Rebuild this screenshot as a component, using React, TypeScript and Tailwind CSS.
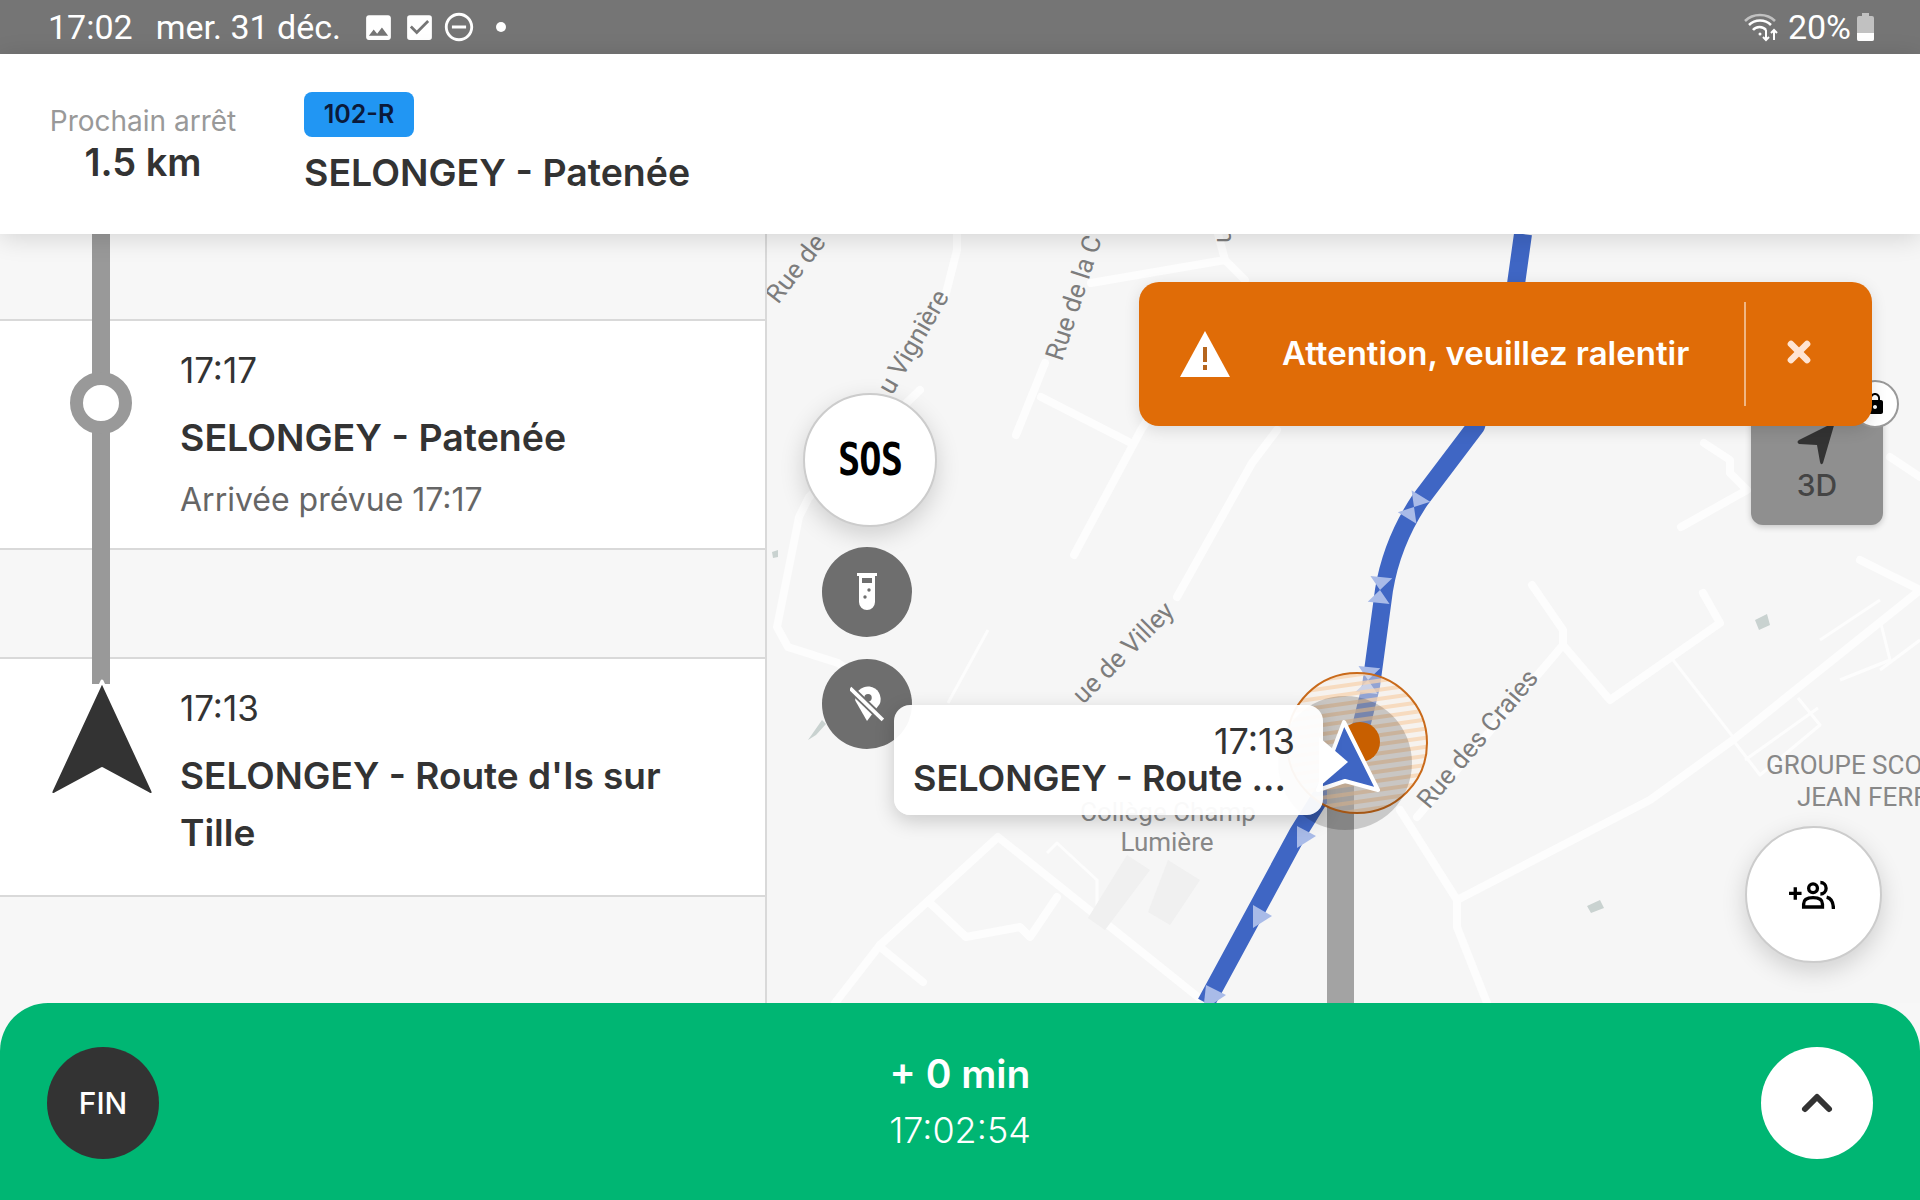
import { ChevronUp, X } from 'lucide-react';
import { MdCheckBox, MdImage, MdLock, MdRemoveCircleOutline } from 'react-icons/md';

const roads = [
  'M957 234 L957 250 L945 297',
  'M920 390 L809 497 L799 517 L777 627 L788 647 L838 663 L900 705',
  'M1045 363 L1016 435',
  'M1041 397 L1131 443',
  'M1160 400 L1141 430 L1074 555',
  'M1091 283 L1225 260 L1245 280',
  'M1225 260 L1218 234',
  'M1277 430 L1252 463 L1177 597',
  'M880 945 L998 837 L1198 997',
  'M880 947 L923 982',
  'M835 1003 L880 945',
  'M930 903 L966 937 L1020 927 L1030 937 L1057 897',
  'M1532 585 L1563 630 L1563 645 L1610 700 L1720 623 L1703 593',
  'M1563 645 L1417 817',
  'M1400 810 L1457 900 L1457 927 L1487 1003',
  'M1457 900 L1650 800 L1733 740 L1920 590',
  'M1860 560 L1920 590',
  'M1704 443 L1730 460 L1730 473 L1747 490 L1681 527',
  'M1890 457 L1920 477',
];

const thinRoads = [
  'M988 630 L948 703',
  'M1047 853 L1057 843 L1097 880 L1097 913',
  'M1673 660 L1733 737',
  'M1733 740 L1760 775 L1820 725 L1798 698',
  'M1745 760 L1818 708',
  'M1820 640 L1880 600',
  'M1840 680 L1890 660 L1880 620',
  'M1880 670 L1920 640',
];

const labels = [
  { text: 'Rue de', x: 778, y: 305, r: -52 },
  { text: 'u Vignière', x: 892, y: 396, r: -60 },
  { text: 'Rue de la C', x: 1062, y: 362, r: -72 },
  { text: 'u', x: 1231, y: 243, r: -90 },
  { text: 'ue de Villey', x: 1083, y: 705, r: -45 },
  { text: 'Rue des Craies', x: 1429, y: 810, r: -50 },
];

const hourglasses = [
  { x: 1414, y: 507, r: 32 },
  { x: 1380, y: 590, r: 6 },
  { x: 1368, y: 680, r: 6 },
];

function MapBackground() {
  return (
    <svg viewBox="767 234 1153 769" className="absolute inset-0 w-[1153px] h-[769px]">
      <defs>
        <pattern id="hatch" width="9" height="9" patternUnits="userSpaceOnUse" patternTransform="rotate(-8)">
          <rect width="9" height="9" fill="#f6eee4" fillOpacity="0.45" />
          <rect width="9" height="4" fill="#f6d3ae" fillOpacity="0.75" />
        </pattern>
      </defs>
      <rect x="767" y="234" width="1153" height="769" fill="#f6f6f6" />
      {roads.map((d) => (
        <path key={d} d={d} fill="none" stroke="#fdfdfd" strokeWidth="8" strokeLinejoin="round" strokeLinecap="round" />
      ))}
      {thinRoads.map((d) => (
        <path key={d} d={d} fill="none" stroke="#fdfdfd" strokeWidth="3" strokeLinejoin="round" />
      ))}
      <path d="M1127 855 L1150 870 L1105 930 L1088 918 Z M1168 860 L1200 880 L1170 925 L1148 912 Z" fill="#f0f0f0" />
      <path d="M1755 620 L1767 614 L1770 625 L1759 630 Z M1587 906 L1600 900 L1604 908 L1591 913 Z M772 552 L778 550 L778 557 L773 558 Z M808 740 L822 720 L826 724 L816 735 Z" fill="#c9d2d0" />
      {labels.map((l) => (
        <text
          key={l.text}
          x={l.x}
          y={l.y}
          transform={`rotate(${l.r} ${l.x} ${l.y})`}
          fontFamily="Roboto, sans-serif"
          fontSize="26"
          fill="#7d7d7d"
        >
          {l.text}
        </text>
      ))}
      <g fontFamily="Roboto, sans-serif" fontSize="26" fill="#888">
        <text x="1168" y="821" textAnchor="middle">Collège Champ</text>
        <text x="1167" y="851" textAnchor="middle">Lumière</text>
        <text x="1766" y="774">GROUPE SCOLAIRE</text>
        <text x="1797" y="806">JEAN FERRY</text>
      </g>

      <path
        d="M1523 234 L1516 284 L1476 426 L1420 500 Q1392 542 1384 590 L1371 686 L1359 735 L1298 833 L1206 1003"
        fill="none"
        stroke="#3f66c4"
        strokeWidth="18"
        strokeLinejoin="round"
      />
      <g fill="#a9bbe8">
        {hourglasses.map((h) => (
          <path key={h.y} d="M-11 -13 H11 L0 0 L11 13 H-11 L0 0 Z" transform={`translate(${h.x} ${h.y}) rotate(${h.r})`} />
        ))}
        <path d="M1297 826 L1316 836 L1297 848 Z" />
        <path d="M1253 905 L1272 916 L1253 928 Z" />
        <path d="M1206 985 L1226 995 L1214 1003 L1204 1003 Z" />
      </g>
      <rect x="1327" y="784" width="27" height="219" fill="#a3a3a3" />
      <circle cx="1357" cy="743" r="70" fill="url(#hatch)" stroke="#c96a1a" strokeWidth="2" />
      <circle cx="1345" cy="763" r="67" fill="#000" fillOpacity="0.18" />
      <circle cx="1360" cy="742" r="20" fill="#c85f00" />
      <path d="M1344 722 L1378 790 L1345 781 L1318 790 Z" fill="#3f66c4" stroke="#fff" strokeWidth="4" strokeLinejoin="round" />
    </svg>
  );
}

function RoundIcon({ className, children }: { className: string; children: React.ReactNode }) {
  return <div className={`absolute flex items-center justify-center rounded-full ${className}`}>{children}</div>;
}

export default function App() {
  return (
    <div className="relative flex h-[1200px] w-[1920px] flex-col overflow-hidden bg-[#f7f7f7] font-[Inter,sans-serif] text-[#333]">
      {/* Status bar */}
      <div className="flex h-[54px] shrink-0 items-center justify-between bg-[#757575] pl-[48px] pr-[46px] font-[Roboto,sans-serif] text-[34px] text-white">
        <div className="flex items-center">
          <span>17:02</span>
          <span className="ml-[23px]">mer. 31 déc.</span>
          <MdImage className="ml-[21px] size-[33px]" />
          <MdCheckBox className="ml-[8px] size-[33px]" />
          <MdRemoveCircleOutline className="ml-[6px] size-[34px]" />
          <span className="ml-[20px] size-[10px] rounded-full bg-white" />
        </div>
        <div className="flex items-center">
          <svg viewBox="0 0 36 30" className="h-[30px] w-[36px]" fill="none" stroke="#fff" strokeWidth="2.5">
            <path d="M2 9 C10 1 24 1 32 9" strokeOpacity="0.55" />
            <path d="M6 13 C12 7 22 7 28 13" />
            <path d="M10 18 C13 14 20 14 23 18" />
            <circle cx="17" cy="22" r="1.5" fill="#fff" stroke="none" />
            <path d="M23 18 V28 M20 25 L23 28 L26 25 M31 28 V18 M28 21 L31 18 L34 21" strokeWidth="2" />
          </svg>
          <span className="ml-[9px]">20%</span>
          <svg viewBox="0 0 17 28" className="ml-[6px] h-[28px] w-[17px]">
            <path d="M5 0 H12 V3 H15 A2 2 0 0 1 17 5 V26 A2 2 0 0 1 15 28 H2 A2 2 0 0 1 0 26 V5 A2 2 0 0 1 2 3 H5 Z" fill="#fff" fillOpacity="0.55" />
            <path d="M0 20 H17 V26 A2 2 0 0 1 15 28 H2 A2 2 0 0 1 0 26 Z" fill="#fff" />
          </svg>
        </div>
      </div>

      {/* Next stop header */}
      <div className="relative z-20 flex h-[180px] shrink-0 bg-white pl-[48px] shadow-[0_4px_24px_rgba(0,0,0,0.14)]">
        <div className="flex w-[190px] flex-col items-center pt-[50px]">
          <span className="whitespace-nowrap text-[28px] leading-[34px] text-[#999]">Prochain arrêt</span>
          <span className="mt-[3px] text-[38px] font-semibold leading-[42px]">1.5 km</span>
        </div>
        <div className="ml-[66px] flex flex-col items-start pt-[38px]">
          <span className="flex h-[45px] w-[110px] items-center justify-center rounded-[8px] bg-[#2196f3] text-[25px] font-semibold text-[#0b1a3a]">
            102-R
          </span>
          <span className="mt-[14px] text-[37.5px] font-semibold leading-[44px]">SELONGEY - Patenée</span>
        </div>
      </div>

      {/* Main area */}
      <div className="relative flex min-h-0 flex-1">
        <div className="relative w-[767px] shrink-0 border-r-2 border-[#d9d9d9] bg-[#f7f7f7] pt-[85px]">
          <div className="flex h-[231px] border-y-2 border-[#d9d9d9] bg-white">
            <div className="w-[180px] shrink-0 pl-[70px] pt-[51px]">
              <div className="relative z-10 size-[62px] rounded-full border-[13px] border-[#999] bg-white" />
            </div>
            <div className="pt-[29px]">
              <div className="text-[35px] leading-[40px]">17:17</div>
              <div className="mt-[19px] text-[37.5px] font-semibold leading-[57px]">SELONGEY - Patenée</div>
              <div className="mt-[14px] text-[32px] leading-[40px] text-[#666]">Arrivée prévue 17:17</div>
            </div>
          </div>
          <div className="h-[107px]" />
          <div className="flex h-[240px] border-y-2 border-[#d9d9d9] bg-white">
            <div className="w-[180px] shrink-0 pl-[47px] pt-[18px]">
              <svg viewBox="0 0 108 118" className="relative z-10 h-[120px] w-[110px]">
                <path
                  d="M54 4 L104 112 Q105 117 100 115 L54 90 L8 115 Q3 117 4 112 Z"
                  fill="#333"
                  stroke="#fff"
                  strokeWidth="3"
                  strokeLinejoin="round"
                />
              </svg>
            </div>
            <div className="w-[520px] pt-[29px]">
              <div className="text-[35px] leading-[40px]">17:13</div>
              <div className="mt-[19px] text-[37px] font-semibold leading-[57px]">SELONGEY - Route d'Is sur Tille</div>
            </div>
          </div>
          <div className="absolute left-[92px] top-0 h-[450px] w-[18px] bg-[#999]" />
        </div>

        <div className="relative flex-1 overflow-hidden">
          <MapBackground />
        </div>

        {/* Controls over the map */}
        <RoundIcon className="left-[803px] top-[159px] size-[134px] border-2 border-[#ccc] bg-white shadow-[0_8px_24px_rgba(0,0,0,0.16)]">
          <span className="scale-y-[1.2] font-['DejaVu_Sans_Mono',monospace] text-[37px] font-bold leading-none tracking-[-1px] text-black">SOS</span>
        </RoundIcon>
        <RoundIcon className="left-[822px] top-[313px] size-[90px] bg-[#6e6e6e]">
          <svg viewBox="0 0 20 38" className="h-[38px] w-[20px]">
            <path d="M0 0 H20 V3 H18 V29 A8 8 0 0 1 2 29 V3 H0 Z" fill="#fff" />
            <rect x="5" y="5" width="10" height="5" fill="#6e6e6e" />
            <circle cx="12" cy="17" r="1.7" fill="#6e6e6e" />
            <circle cx="8" cy="24" r="1.7" fill="#6e6e6e" />
          </svg>
        </RoundIcon>
        <RoundIcon className="left-[822px] top-[425px] size-[90px] bg-[#6e6e6e]">
          <svg viewBox="0 0 32 34" className="h-[36px] w-[34px]">
            <path d="M16 33 L5 14 A12 12 0 1 1 28 17 Z" fill="#fff" />
            <circle cx="17" cy="11" r="3.5" fill="#6e6e6e" />
            <path d="M0 2 L31 32" stroke="#6e6e6e" strokeWidth="7" />
            <path d="M0 2 L31 32" stroke="#fff" strokeWidth="3.5" />
          </svg>
        </RoundIcon>

        {/* Stop popup */}
        <div className="absolute left-[894px] top-[471px] flex h-[110px] w-[429px] flex-col items-stretch rounded-[16px] bg-white/95 px-[19px] pt-[14px] shadow-[0_6px_20px_rgba(0,0,0,0.18)]">
          <div className="pr-[9px] text-right text-[36px] font-normal leading-[44px]">17:13</div>
          <div className="-mt-[7px] truncate text-[36px] font-semibold leading-[44px]">SELONGEY - Route ...</div>
          <div className="absolute left-[425px] top-[32px] size-0 border-y-[25px] border-l-[29px] border-y-transparent border-l-white" />
        </div>

        {/* 3D toggle */}
        <div className="absolute left-[1751px] top-[150px] flex h-[141px] w-[132px] flex-col items-center justify-end rounded-[12px] bg-[#8f8f8f] pb-[23px] shadow-[0_2px_6px_rgba(0,0,0,0.2)]">
          <svg viewBox="0 0 40 44" className="h-[44px] w-[40px]">
            <path d="M38 0 L26 41 Q24 44 23 40 L20 23 L2 22 Q-1 20 2 18 Z" fill="#333" />
          </svg>
          <span className="mt-[2px] text-[30px] font-medium leading-[34px] text-[#444]">3D</span>
        </div>
        <RoundIcon className="left-[1851px] top-[146px] size-[48px] border-2 border-[#999] bg-white">
          <MdLock className="size-[24px] text-black" />
        </RoundIcon>

        {/* Speed warning */}
        <div className="absolute left-[1139px] top-[48px] flex h-[144px] w-[733px] items-center rounded-[20px] bg-[#e06c07] text-white shadow-[0_4px_16px_rgba(0,0,0,0.12)]">
          <svg viewBox="0 0 50 46" className="ml-[41px] h-[46px] w-[50px] shrink-0">
            <path d="M25 0 L50 46 H0 Z" fill="#fff" />
            <rect x="23" y="16" width="4" height="15" fill="#b5651d" />
            <rect x="23" y="34" width="4" height="5" fill="#b5651d" />
          </svg>
          <span className="ml-[52px] w-[462px] text-[33px] font-semibold">Attention, veuillez ralentir</span>
          <div className="h-[104px] w-[2px] bg-white/50" />
          <div className="flex flex-1 justify-center pb-[4px] pr-[20px]">
            <X className="size-[32px] text-[#ffe4d2]" strokeWidth={5} />
          </div>
        </div>

        <RoundIcon className="left-[1745px] top-[592px] size-[137px] border-2 border-[#ccc] bg-white pr-[4px] shadow-[0_8px_24px_rgba(0,0,0,0.16)]">
          <svg viewBox="0 0 44 27" className="h-[30px] w-[46px]" fill="none" stroke="#000" strokeWidth="3.2">
            <path d="M0 12 H12 M6 6 V18" />
            <circle cx="23" cy="7" r="4.2" />
            <path d="M14 25 V22 Q14 16 23 16 Q32 16 32 22 V25 Z" />
            <path d="M30 1.5 A5.5 5.5 0 0 1 30 12.5" />
            <path d="M36 15.5 Q42.5 17 42.5 27" />
          </svg>
        </RoundIcon>
      </div>

      {/* Bottom bar */}
      <div className="relative z-20 -mt-[48px] flex h-[197px] shrink-0 items-center justify-between rounded-t-[48px] bg-[#00b673] px-[47px] text-white">
        <div className="mt-[3px] flex size-[112px] items-center justify-center rounded-full bg-[#333] text-[30px] font-medium">FIN</div>
        <div className="flex flex-col items-center">
          <span className="text-[39px] font-semibold leading-[52px]">+ 0 min</span>
          <span className="mt-[4px] text-[36px] font-light leading-[52px]">17:02:54</span>
        </div>
        <div className="mt-[3px] flex size-[112px] items-center justify-center rounded-full bg-white">
          <ChevronUp className="size-[48px] text-[#333]" strokeWidth={3} />
        </div>
      </div>
    </div>
  );
}
